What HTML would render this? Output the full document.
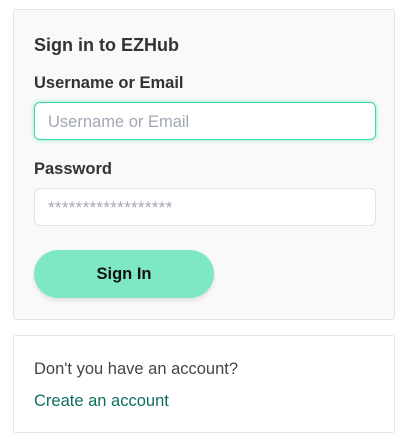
<!DOCTYPE html>
<html><head><style>
body{margin:0;background:#fff;font-family:"Liberation Sans",sans-serif;width:419px;height:442px;position:relative;color:#333}
.c{position:absolute;left:13px;width:382px;border:1px solid #e3e3e3;border-radius:3px;box-sizing:border-box}
.a{top:9px;height:311px;background:#f9f9f9}
.b{top:335px;height:98px;background:#fff}
.t{position:absolute;font-weight:bold}
.in{position:absolute;left:20px;width:342px;height:38px;box-sizing:border-box;background:#fff;border:1px solid #e2e2e2;border-radius:6px;color:#a2a7b5;font-size:16.5px;padding-left:13px;line-height:38px}
</style></head><body>
<div class="c a">
<div class="t" style="left:20px;top:25px;font-size:18px;color:#333">Sign in to EZHub</div>
<div class="t" style="left:20px;top:64px;font-size:16.5px;color:#333">Username or Email</div>
<div class="in" style="top:92px;border-color:#3ddba5;box-shadow:0 0 4px rgba(61,219,165,.6)">Username or Email</div>
<div class="t" style="left:20px;top:150px;font-size:16.5px;color:#333">Password</div>
<div class="in" style="top:178px;letter-spacing:0.3px;font-size:17px">******************</div>
<div style="position:absolute;left:20px;top:240px;width:180px;height:48px;border-radius:24px;background:#7de8c1;box-shadow:0 3px 5px rgba(0,0,0,.1);text-align:center;line-height:49px;font-weight:bold;font-size:16.5px;color:#111">Sign In</div>
</div>
<div class="c b">
<div style="position:absolute;left:20px;top:24px;font-size:16.5px;color:#444">Don't you have an account?</div>
<div style="position:absolute;left:20px;top:56px;font-size:16.5px;color:#0f6e63">Create an account</div>
</div>
</body></html>
